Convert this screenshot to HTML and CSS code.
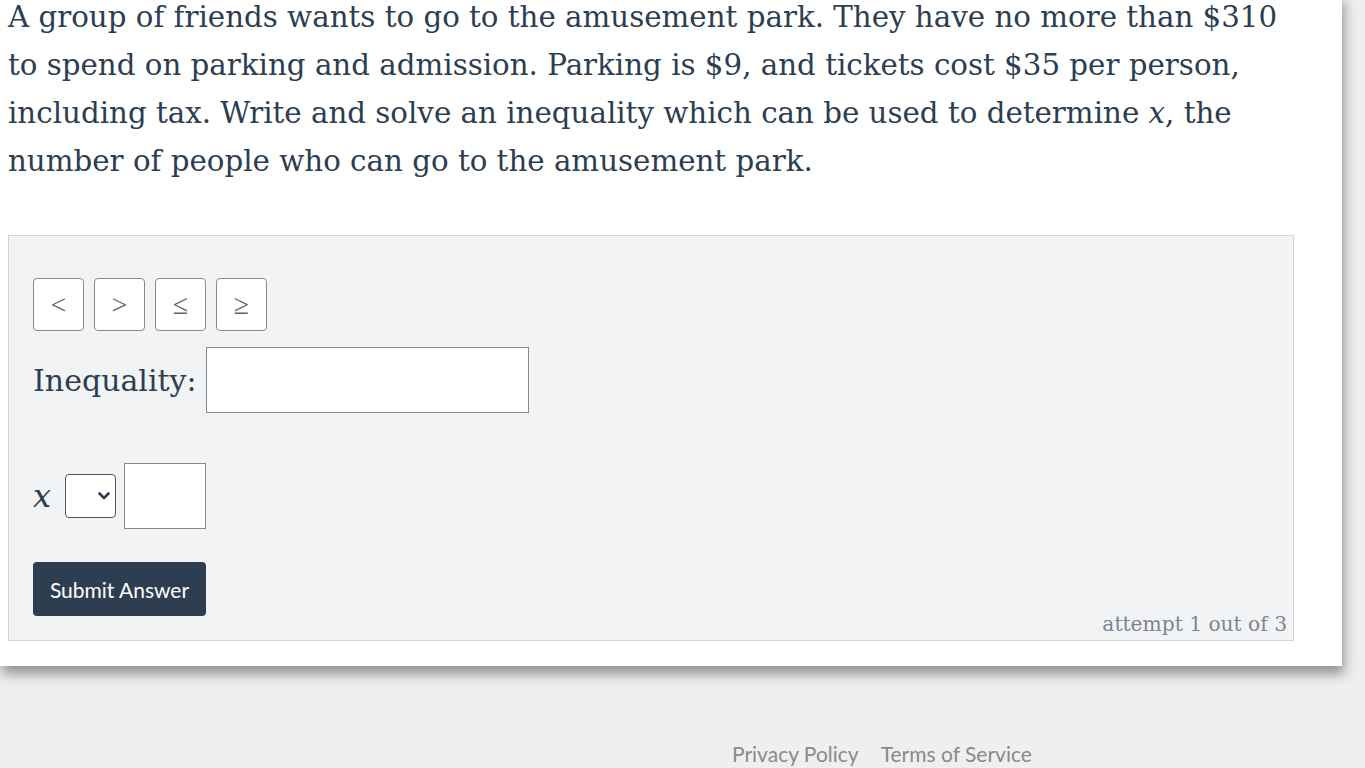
FILE: index.html
```html
<!DOCTYPE html>
<html lang="en">
<head>
    <meta charset="UTF-8">
    <meta name="viewport" content="width=device-width, initial-scale=1.0">
    <title>Inequality Problem</title>
    <link rel="stylesheet" href="styles.css">
</head>
<body>
    <div class="card">
        <p class="problem">A group of friends wants to go to the amusement park. They have no more than $310 to spend on parking and admission. Parking is $9, and tickets cost $35 per person, including tax. Write and solve an inequality which can be used to determine <i class="math">x</i>, the number of people who can go to the amusement park.</p>

        <div class="answer-panel">
            <div class="symbol-buttons">
                <button class="symbol">&lt;</button>
                <button class="symbol">&gt;</button>
                <button class="symbol">&le;</button>
                <button class="symbol">&ge;</button>
            </div>

            <div class="inequality-row">
                <label class="field-label" for="inequality">Inequality:</label>
                <input type="text" id="inequality" class="inequality-input">
            </div>

            <div class="solution-row">
                <i class="math math-var">x</i>
                <span class="select-wrap">
                    <select class="sign-select">
                        <option></option>
                        <option>&lt;</option>
                        <option>&gt;</option>
                        <option>&le;</option>
                        <option>&ge;</option>
                    </select>
                    <svg class="chevron" width="12" height="8" viewBox="0 0 12 8"><path d="M1.5 1.5 L6 6 L10.5 1.5" fill="none" stroke="#2c3e50" stroke-width="2.6" stroke-linecap="round" stroke-linejoin="round"/></svg>
                </span>
                <input type="text" class="value-input">
            </div>

            <div class="submit-row">
                <button class="submit">Submit Answer</button>
                <span class="attempt">attempt 1 out of 3</span>
            </div>
        </div>
    </div>

    <div class="footer">
        <a href="#">Privacy Policy</a>
        <a href="#">Terms of Service</a>
    </div>
</body>
</html>
```

FILE: styles.css
```css
body {
    margin: 0;
    background-color: #efefef;
    font-family: "DejaVu Serif", serif;
    color: #2c3e50;
    overflow: hidden;
}
.card {
    width: 1342px;
    margin-top: -7px;
    padding-bottom: 25px;
    background-color: #fff;
    box-shadow: 2px 8px 12px rgba(0, 0, 0, 0.4);
}
.problem {
    margin: 0 0 50px 0;
    padding-left: 8px;
    width: 1290px;
    font-size: 29.3px;
    line-height: 48px;
}
.math {
    font-style: italic;
}
.answer-panel {
    margin-left: 8px;
    width: 1236px;
    padding: 42px 24px 4px 24px;
    background-color: #f2f3f5;
    border: 1px solid #d3d3d3;
}
.symbol-buttons {
    display: flex;
    gap: 10px;
}
.symbol {
    width: 51px;
    height: 53px;
    padding: 0;
    background-color: #fff;
    border: 1px solid #8a8a8a;
    border-radius: 4px;
    font-family: "Liberation Serif", serif;
    font-size: 28px;
    color: #666;
}
.inequality-row {
    display: flex;
    align-items: center;
    margin-top: 16px;
    gap: 9px;
}
.field-label {
    font-size: 30px;
}
.inequality-input {
    width: 323px;
    height: 66px;
    box-sizing: border-box;
    border: 1px solid #8a8a8a;
    background-color: #fff;
}
.solution-row {
    display: flex;
    align-items: center;
    margin-top: 50px;
    gap: 8px;
}
.math-var {
    font-size: 32px;
    width: 24px;
}
.select-wrap {
    position: relative;
    display: inline-block;
}
.sign-select {
    -webkit-appearance: none;
    appearance: none;
    width: 51px;
    height: 44px;
    border: 1px solid #555;
    border-radius: 4px;
    background-color: #fff;
    display: block;
}
.chevron {
    position: absolute;
    right: 6px;
    top: 18px;
    pointer-events: none;
}
.value-input {
    width: 82px;
    height: 66px;
    box-sizing: border-box;
    border: 1px solid #8a8a8a;
    background-color: #fff;
}
.submit-row {
    display: flex;
    justify-content: space-between;
    align-items: flex-end;
    margin-top: 33px;
}
.submit {
    width: 173px;
    height: 54px;
    border: none;
    border-radius: 4px;
    background-color: #2c3e50;
    color: #fff;
    font-family: Lato, sans-serif;
    font-size: 21px;
    margin-bottom: 20px;
}
.attempt {
    margin-right: -18px;
    font-size: 20.2px;
    color: #7d8590;
}
.footer {
    display: flex;
    gap: 22px;
    padding: 75px 0 0 732px;
    font-family: Lato, sans-serif;
    font-size: 21px;
}
.footer a {
    color: #8a8a8a;
    text-decoration: none;
}
```
